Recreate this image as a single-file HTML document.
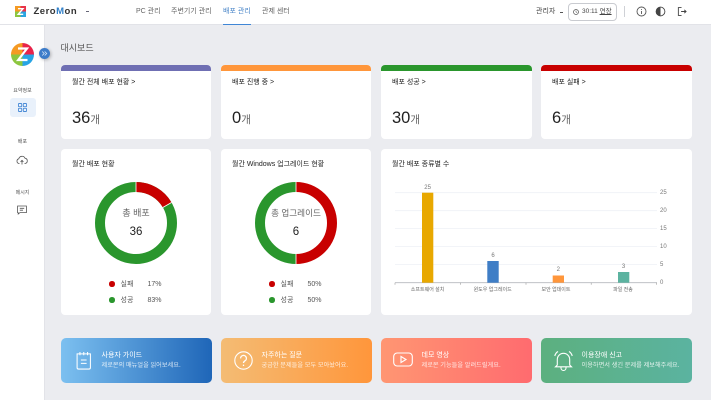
<!DOCTYPE html>
<html lang="ko"><head><meta charset="utf-8"><title>ZeroMon</title>
<style>
html,body{margin:0;padding:0;width:716px;height:400px;overflow:hidden;background:#ebecf0;font-family:"Liberation Sans","Noto Sans CJK KR",sans-serif;color:#333}
#w{left:0;top:0;width:716px;height:400px;filter:blur(.25px)}
div,span,a{position:absolute;white-space:nowrap;box-sizing:border-box}
svg{position:absolute;overflow:visible}
.card{background:#fff;border-radius:4px}
.strip{left:0;top:0;width:100%;height:6px;border-radius:4px 4px 0 0}
.t{font-size:7px;line-height:10px;color:#222}
.n{font-size:16.5px;line-height:18px;color:#222;left:11px;top:43.5px}
.n i{font-style:normal;font-size:10.5px;color:#666}
.nav{font-size:7px;line-height:10px;top:6.5px;color:#666}
.sl{font-size:5px;line-height:8px;color:#555;width:45px;text-align:center;left:0}
.lg{font-size:7px;line-height:10px;color:#555}
.dot{width:5.5px;height:5.5px;border-radius:50%}
.b{top:338px;height:45px;width:151px;border-radius:5px}
.b1{font-size:7px;line-height:10px;color:#fff;left:40.5px;top:12.5px}
.b2{font-size:6.2px;line-height:8px;color:#ffffffd0;left:40.5px;top:24px}
.yl{font-size:6px;line-height:8px;color:#777;left:660px}
.xl{font-size:5px;line-height:8px;color:#666;text-align:center;width:66px}
.v{font-size:6px;line-height:8px;color:#777;text-align:center;width:20px}
</style></head><body>
<div id="w">
<div style="left:0;top:0;width:716px;height:25px;background:#fff;border-bottom:1px solid #e2e3e8"></div>
<div style="left:0;top:25px;width:45px;height:375px;background:#fff;border-right:1px solid #e2e3e8"></div>
<div style="left:711px;top:0;width:5px;height:400px;background:#fff"></div>

<!-- logo -->
<svg style="left:15px;top:6px" width="11" height="11" viewBox="0 0 11 11">
<rect width="5.5" height="5.5" fill="#f59a23"/><rect x="5.5" width="5.5" height="5.5" fill="#e8334a"/><rect y="5.5" width="5.5" height="5.5" fill="#8cc63f"/><rect x="5.5" y="5.5" width="5.5" height="5.5" fill="#2aa5e0"/>
<path d="M3 2.7H8L3.2 8.3H8.2" fill="none" stroke="#fff" stroke-width="1.4"/></svg>
<div style="left:33.5px;top:5px;font-size:9.5px;line-height:14px;font-weight:700;color:#333;letter-spacing:.5px">Zero<span style="position:static;color:#2f7fc9">M</span>on</div>
<div style="left:86px;top:11px;width:3px;height:1.4px;background:#667"></div>

<div class="nav" style="left:136px">PC 관리</div>
<div class="nav" style="left:171px">주변기기 관리</div>
<div class="nav" style="left:223px;color:#4a86c8">배포 관리</div>
<div class="nav" style="left:262px">관제 센터</div>
<div style="left:223px;top:24px;width:28px;height:1px;background:#3f86d6"></div>

<!-- header right -->
<div class="nav" style="left:536px;color:#444">관리자</div>
<div style="left:560px;top:11.5px;width:3px;height:1.2px;background:#555"></div>
<div style="left:568px;top:3px;width:49px;height:18px;border:1px solid #c9cbd0;border-radius:4px"></div>
<svg style="left:573px;top:9px" width="6" height="6" viewBox="0 0 6 6"><circle cx="3" cy="3" r="2.5" fill="none" stroke="#555" stroke-width=".7"/><path d="M3 1.5V3L4.2 3.6" fill="none" stroke="#555" stroke-width=".6"/></svg>
<div class="nav" style="left:582px;color:#444;font-size:6.5px">30:11 <span style="position:static;text-decoration:underline">연장</span></div>
<div style="left:624px;top:6px;width:1px;height:11px;background:#cfd1d6"></div>
<svg style="left:636px;top:6px" width="11" height="11" viewBox="0 0 11 11"><circle cx="5.5" cy="5.5" r="4.5" fill="none" stroke="#555" stroke-width=".9"/><path d="M5.5 5V8M5.5 3V3.9" stroke="#555" stroke-width=".9" fill="none"/></svg>
<svg style="left:655px;top:6px" width="11" height="11" viewBox="0 0 11 11"><circle cx="5.5" cy="5.5" r="4.4" fill="#fff" stroke="#444" stroke-width=".9"/><path d="M5.5 1.1A4.4 4.4 0 0 0 5.5 9.9Z" fill="#444"/></svg>
<svg style="left:677px;top:6px" width="10" height="11" viewBox="0 0 11 11"><path d="M5 1.2H1.5V9.8H5M4.5 5.5H10M8 3.6L10 5.5L8 7.4" fill="none" stroke="#444" stroke-width="1"/></svg>

<!-- sidebar -->
<svg style="left:11px;top:43px" width="23" height="23" viewBox="0 0 23 23">
<path d="M11.5 11.5V0A11.5 11.5 0 0 1 23 11.5Z" fill="#e8234a"/>
<path d="M11.5 11.5H23A11.5 11.5 0 0 1 11.5 23Z" fill="#27a4e4"/>
<path d="M11.5 11.5V23A11.5 11.5 0 0 1 0 11.5Z" fill="#8cc63f"/>
<path d="M11.5 11.5H0A11.5 11.5 0 0 1 11.5 0Z" fill="#f59a23"/>
<path d="M7 5.5H16L7.2 17H16.5" fill="none" stroke="#fff" stroke-width="2.2"/></svg>
<div style="left:39px;top:48px;width:11px;height:11px;border-radius:50%;background:#3d7cc9;box-shadow:1px 1px 3px #0004"></div>
<svg style="left:41px;top:50px" width="7" height="7" viewBox="0 0 7 7"><path d="M1.2 1.5L3.2 3.5L1.2 5.5M3.7 1.5L5.7 3.5L3.7 5.5" fill="none" stroke="#d8e6f7" stroke-width=".8"/></svg>

<div class="sl" style="top:87px">요약정보</div>
<div style="left:9.5px;top:98px;width:26px;height:19px;background:#e9f1fb;border-radius:3px"></div>
<svg style="left:18px;top:103px" width="9" height="9" viewBox="0 0 9 9"><g fill="none" stroke="#4a8bd6" stroke-width=".9"><rect x=".5" y=".5" width="3.2" height="3.2" rx=".5"/><rect x="5.3" y=".5" width="3.2" height="3.2" rx=".5"/><rect x=".5" y="5.3" width="3.2" height="3.2" rx=".5"/><rect x="5.3" y="5.3" width="3.2" height="3.2" rx=".5"/></g></svg>
<div class="sl" style="top:138px">배포</div>
<svg style="left:16px;top:154.5px" width="12" height="10" viewBox="0 0 12 10"><path d="M3.5 8.5H3A2.4 2.4 0 0 1 2.8 3.8A3.3 3.3 0 0 1 9 3.2A2.7 2.7 0 0 1 9.2 8.5H8.5M6 9.5V5.5M4.6 6.8L6 5.3L7.4 6.8" fill="none" stroke="#555" stroke-width=".8"/></svg>
<div class="sl" style="top:188.5px">메시지</div>
<svg style="left:17px;top:205px" width="10" height="10" viewBox="0 0 10 10"><path d="M.6 1H9.4V7.6H3L1.2 9V7.6H.6ZM2.8 3.3H7.2M2.8 5.2H6" fill="none" stroke="#555" stroke-width=".8"/></svg>

<div style="left:60.5px;top:42px;font-size:9px;line-height:13px;color:#555">대시보드</div>

<!-- top cards -->
<div class="card" style="left:61px;top:65px;width:150px;height:74px"><div class="strip" style="background:#6f6fb3"></div><div class="t" style="left:11px;top:12.5px">월간 전체 배포 현황 &gt;</div><div class="n">36<i>개</i></div></div>
<div class="card" style="left:221px;top:65px;width:150px;height:74px"><div class="strip" style="background:#ff963b"></div><div class="t" style="left:11px;top:12.5px">배포 진행 중 &gt;</div><div class="n">0<i>개</i></div></div>
<div class="card" style="left:381px;top:65px;width:151px;height:74px"><div class="strip" style="background:#2a962d"></div><div class="t" style="left:11px;top:12.5px">배포 성공 &gt;</div><div class="n">30<i>개</i></div></div>
<div class="card" style="left:541px;top:65px;width:151px;height:74px"><div class="strip" style="background:#c80000"></div><div class="t" style="left:11px;top:12.5px">배포 실패 &gt;</div><div class="n">6<i>개</i></div></div>

<!-- mid cards -->
<div class="card" style="left:61px;top:149px;width:150px;height:166px"></div>
<div class="card" style="left:221px;top:149px;width:150px;height:166px"></div>
<div class="card" style="left:381px;top:149px;width:311px;height:166px"></div>
<div class="t" style="left:72px;top:159.5px">월간 배포 현황</div>
<div class="t" style="left:232px;top:159.5px">월간 Windows 업그레이드 현황</div>
<div class="t" style="left:392px;top:159.5px">월간 배포 종류별 수</div>

<svg style="left:95px;top:182px" width="82" height="82" viewBox="0 0 82 82">
<circle cx="41" cy="41" r="36" fill="none" stroke="#2a962d" stroke-width="10"/>
<path d="M41 5A36 36 0 0 1 72.2 23" fill="none" stroke="#c80000" stroke-width="10"/>
<path d="M41 0V10M76.5 20.5L67.8 25.5" stroke="#fff" stroke-width=".8"/></svg>
<div style="left:95px;top:207px;width:82px;text-align:center;font-size:9px;line-height:13px;color:#666">총 배포</div>
<div style="left:95px;top:224.5px;width:82px;text-align:center;font-size:11.5px;line-height:15px;color:#222">36</div>
<div class="dot" style="left:109px;top:281px;background:#c80000"></div><div class="lg" style="left:120.5px;top:279.5px">실패</div><div class="lg" style="left:147.5px;top:279.5px">17%</div>
<div class="dot" style="left:109px;top:297px;background:#2a962d"></div><div class="lg" style="left:120.5px;top:296px">성공</div><div class="lg" style="left:147.5px;top:296px">83%</div>

<svg style="left:255px;top:182px" width="82" height="82" viewBox="0 0 82 82">
<path d="M41 5A36 36 0 0 1 41 77" fill="none" stroke="#c80000" stroke-width="10"/>
<path d="M41 77A36 36 0 0 1 41 5" fill="none" stroke="#2a962d" stroke-width="10"/>
<path d="M41 0V10M41 72V82" stroke="#fff" stroke-width=".8"/></svg>
<div style="left:255px;top:207px;width:82px;text-align:center;font-size:8.6px;line-height:13px;color:#666">총 업그레이드</div>
<div style="left:255px;top:224.5px;width:82px;text-align:center;font-size:11.5px;line-height:15px;color:#222">6</div>
<div class="dot" style="left:269px;top:281px;background:#c80000"></div><div class="lg" style="left:280.5px;top:279.5px">실패</div><div class="lg" style="left:307.5px;top:279.5px">50%</div>
<div class="dot" style="left:269px;top:297px;background:#2a962d"></div><div class="lg" style="left:280.5px;top:296px">성공</div><div class="lg" style="left:307.5px;top:296px">50%</div>

<!-- bar chart -->
<svg style="left:0;top:0" width="716" height="400">
<g stroke="#eef1f6" stroke-width=".8"><path d="M395 192.7H657M395 210.7H657M395 228.6H657M395 246.6H657M395 264.6H657"/></g>
<path d="M395 282.7H657" stroke="#b5b8be" stroke-width=".8"/>
<path d="M395 282.7v2M460.5 282.7v2M526 282.7v2M591.2 282.7v2M656.7 282.7v2" stroke="#999" stroke-width=".6"/>
<rect x="422" y="192.7" width="11.3" height="90" fill="#e8a800"/>
<rect x="487.3" y="261" width="11.4" height="21.7" fill="#3f7ec6"/>
<rect x="552.7" y="275.5" width="11.3" height="7.2" fill="#ff963b"/>
<rect x="618" y="272" width="11.3" height="10.7" fill="#5cb3a0"/>
</svg>
<div class="v" style="left:417.6px;top:183.5px">25</div>
<div class="v" style="left:483px;top:251.5px">6</div>
<div class="v" style="left:548.3px;top:266px">2</div>
<div class="v" style="left:613.6px;top:262.5px">3</div>
<div class="yl" style="top:189px">25</div><div class="yl" style="top:207px">20</div><div class="yl" style="top:225px">15</div><div class="yl" style="top:243px">10</div><div class="yl" style="top:261px">5</div><div class="yl" style="top:279px">0</div>
<div class="xl" style="left:394.6px;top:285.5px">소프트웨어 설치</div>
<div class="xl" style="left:459.7px;top:285.5px">윈도우 업그레이드</div>
<div class="xl" style="left:523px;top:285.5px">보안 업데이트</div>
<div class="xl" style="left:590px;top:285.5px">파일 전송</div>

<!-- bottom cards -->
<div class="b" style="left:61px;background:linear-gradient(90deg,#7cc0f0,#1f66b8)">
<svg style="left:14.5px;top:12.5px" width="15.5" height="19" viewBox="0 0 16 20"><path d="M1 3H15V17.5A1.5 1.5 0 0 1 13.5 19H2.5A1.5 1.5 0 0 1 1 17.5ZM4 1V4.5M8 1V4.5M12 1V4.5M5 9.5H11M5 13H11" fill="none" stroke="#fff" stroke-width="1.1"/></svg>
<div class="b1">사용자 가이드</div><div class="b2">제로몬의 매뉴얼을 읽어보세요.</div></div>
<div class="b" style="left:221px;background:linear-gradient(90deg,#f4bc74,#ff963b)">
<svg style="left:13px;top:13px" width="19" height="19" viewBox="0 0 19 19"><circle cx="9.5" cy="9.5" r="8.7" fill="none" stroke="#fff" stroke-width="1.1"/><path d="M6.6 7.4A2.9 2.9 0 1 1 11 9.8C10 10.4 9.5 11 9.5 12M9.5 13.6V15" fill="none" stroke="#fff" stroke-width="1.3"/></svg>
<div class="b1">자주하는 질문</div><div class="b2">궁금한 문제들을 모두 모아놨어요.</div></div>
<div class="b" style="left:381px;width:151px;background:linear-gradient(90deg,#ff9672,#ff6b6f)">
<svg style="left:12px;top:13px" width="20" height="17" viewBox="0 0 20 17"><rect x=".7" y="2" width="18.6" height="13" rx="3.5" fill="none" stroke="#fff" stroke-width="1.1"/><path d="M8 5.5L13 8.5L8 11.5Z" fill="none" stroke="#fff" stroke-width="1.1"/></svg>
<div class="b1">데모 영상</div><div class="b2">제로몬 기능들을 알려드릴게요.</div></div>
<div class="b" style="left:541px;background:linear-gradient(90deg,#5cb07f,#5bb3a0)">
<svg style="left:13px;top:12px" width="19" height="21" viewBox="0 0 19 21"><path d="M3.3 15V9.5A6.2 6.2 0 0 1 15.7 9.5V15L17.5 16.8H1.5ZM7 17V18A2.5 2.5 0 0 0 12 18V17M.8 6A7 7 0 0 1 4 1.5M18.2 6A7 7 0 0 0 15 1.5" fill="none" stroke="#fff" stroke-width="1.1"/></svg>
<div class="b1">이용장애 신고</div><div class="b2">이용하면서 생긴 문제를 제보해주세요.</div></div>
</div>
</body></html>
